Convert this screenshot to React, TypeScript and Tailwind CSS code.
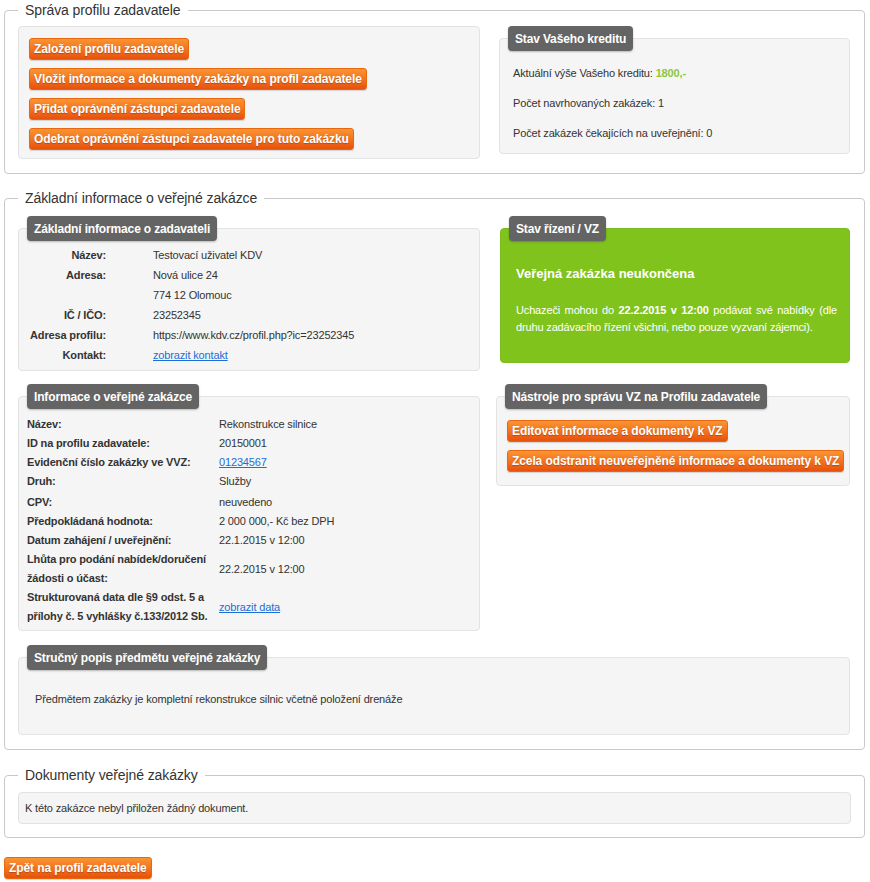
import type { ReactNode } from "react";

const Fieldset = ({ legend, className = "", children }: { legend: string; className?: string; children: ReactNode }) => (
  <fieldset className={`border border-[#c9c9c9] rounded-[4px] px-[13px] ${className}`}>
    <legend className="px-[7px] text-[14px] leading-[16px] tracking-[-0.1px] text-[#333]">{legend}</legend>
    {children}
  </fieldset>
);

// tmavý štítek nad panelem
const Tab = ({ children }: { children: ReactNode }) => (
  <div className="relative z-10 self-start ml-[9px] -mb-[13px] h-[25px] px-[7px] flex items-center rounded-[4px] bg-[#646464] text-white text-[12px] font-bold tracking-[-0.15px] whitespace-nowrap shadow-[0_1px_2px_rgba(0,0,0,0.25)]">
    {children}
  </div>
);

const OrangeButton = ({ children }: { children: ReactNode }) => (
  <button className="h-[22px] px-[4px] rounded-[3px] border border-[#e9680f] bg-linear-to-b from-[#fa9431] to-[#e8500a] text-white text-[12px] font-bold leading-[20px] tracking-[-0.1px] whitespace-nowrap [text-shadow:0_1px_1px_rgba(0,0,0,0.25)] shadow-[0_1px_1px_rgba(0,0,0,0.15)]">
    {children}
  </button>
);

const panel = "bg-[#f5f5f5] border border-[#e3e3e3] rounded-[4px]";

const zadavatel: [string, ReactNode][] = [
  ["Název:", "Testovací uživatel KDV"],
  ["Adresa:", "Nová ulice 24"],
  ["", "774 12 Olomouc"],
  ["IČ / IČO:", "23252345"],
  ["Adresa profilu:", "https://www.kdv.cz/profil.php?ic=23252345"],
  ["Kontakt:", <a href="#" className="text-[#1a6fd8] underline">zobrazit kontakt</a>],
];

const zakazka: [ReactNode, ReactNode, string?][] = [
  ["Název:", "Rekonstrukce silnice"],
  ["ID na profilu zadavatele:", "20150001"],
  ["Evidenční číslo zakázky ve VVZ:", <a href="#" className="text-[#1a6fd8] underline">01234567</a>],
  ["Druh:", "Služby"],
  ["CPV:", "neuvedeno", "mt-[2px]"],
  ["Předpokládaná hodnota:", "2 000 000,- Kč bez DPH"],
  ["Datum zahájení / uveřejnění:", "22.1.2015 v 12:00"],
  [<>Lhůta pro podání nabídek/doručení<br />žádosti o účast:</>, "22.2.2015 v 12:00"],
  [<>Strukturovaná data dle §9 odst. 5 a<br />přílohy č. 5 vyhlášky č.133/2012 Sb.</>, <a href="#" className="text-[#1a6fd8] underline">zobrazit data</a>],
];

export default function App() {
  return (
    <div className="w-[870px] min-h-[882px] bg-white pl-[4px] pr-[5px] pt-[2px] font-['Liberation_Sans',Arial,sans-serif] text-[11px] tracking-[-0.15px] text-[#333]">
      {/* Správa profilu */}
      <Fieldset legend="Správa profilu zadavatele" className="pt-[8px] pb-[14px]">
        <div className="grid grid-cols-[462px_351px] gap-x-[19px] items-start">
          <div className={`${panel} flex flex-col items-start gap-[8px] pl-[10px] pt-[11px] pb-[8px]`}>
            <OrangeButton>Založení profilu zadavatele</OrangeButton>
            <OrangeButton>Vložit informace a dokumenty zakázky na profil zadavatele</OrangeButton>
            <OrangeButton>Přidat oprávnění zástupci zadavatele</OrangeButton>
            <OrangeButton>Odebrat oprávnění zástupci zadavatele pro tuto zakázku</OrangeButton>
          </div>
          <div className="flex flex-col">
            <Tab>Stav Vašeho kreditu</Tab>
            <div className={`${panel} pl-[13px] pt-[19px] pb-[5px] leading-[30px]`}>
              <div>
                Aktuální výše Vašeho kreditu: <span className="font-bold text-[#8cc63f]">1800,-</span>
              </div>
              <div>Počet navrhovaných zakázek: 1</div>
              <div>Počet zakázek čekajících na uveřejnění: 0</div>
            </div>
          </div>
        </div>
      </Fieldset>

      {/* Základní informace */}
      <Fieldset legend="Základní informace o veřejné zakázce" className="mt-[16px] pt-[10px] pb-[14px]">
        <div className="grid grid-cols-[462px_350px] gap-x-[20px] gap-y-[13px] items-start">
          <div className="flex flex-col">
            <Tab>Základní informace o zadavateli</Tab>
            <div className={`${panel} pt-[16px] pb-[5px]`}>
              {zadavatel.map(([label, value], i) => (
                <div key={i} className="flex leading-[20px]">
                  <div className="w-[87px] text-right font-bold">{label}</div>
                  <div className="pl-[47px]">{value}</div>
                </div>
              ))}
            </div>
          </div>

          <div className="flex flex-col">
            <Tab>Stav řízení / VZ</Tab>
            <div className="rounded-[4px] border border-[#7bbd1a] bg-[#80c31d] text-white pl-[15px] pr-[12px] pt-[35px] pb-[26px]">
              <div className="text-[13px] font-bold leading-[20px] tracking-normal">Veřejná zakázka neukončena</div>
              <p className="mt-[18px] leading-[17px] text-justify">
                Uchazeči mohou do <b>22.2.2015 v 12:00</b> podávat své nabídky (dle druhu zadávacího řízení všichni, nebo pouze vyzvaní zájemci).
              </p>
            </div>
          </div>

          <div className="flex flex-col">
            <Tab>Informace o veřejné zakázce</Tab>
            <div className={`${panel} pl-[8px] pt-[18px] pb-[4px]`}>
              {zakazka.map(([label, value, extra], i) => (
                <div key={i} className={`grid grid-cols-[192px_1fr] items-center leading-[19px] ${extra ?? ""}`}>
                  <div className="font-bold">{label}</div>
                  <div>{value}</div>
                </div>
              ))}
            </div>
          </div>

          <div className="flex flex-col -ml-[4px]">
            <Tab>Nástroje pro správu VZ na Profilu zadavatele</Tab>
            <div className={`${panel} flex flex-col items-start gap-[8px] pl-[10px] pt-[23px] pb-[13px]`}>
              <OrangeButton>Editovat informace a dokumenty k VZ</OrangeButton>
              <OrangeButton>Zcela odstranit neuveřejněné informace a dokumenty k VZ</OrangeButton>
            </div>
          </div>

          <div className="col-span-2 flex flex-col mt-[1px]">
            <Tab>Stručný popis předmětu veřejné zakázky</Tab>
            <div className={`${panel} pl-[16px] pt-[31px] pb-[25px] leading-[20px]`}>
              Předmětem zakázky je kompletní rekonstrukce silnic včetně položení drenáže
            </div>
          </div>
        </div>
      </Fieldset>

      {/* Dokumenty */}
      <Fieldset legend="Dokumenty veřejné zakázky" className="mt-[17px] pt-[9px] pb-[13px]">
        <div className={`${panel} h-[32px] pl-[6px] flex items-center`}>
          K této zakázce nebyl přiložen žádný dokument.
        </div>
      </Fieldset>

      <div className="mt-[19px]">
        <OrangeButton>Zpět na profil zadavatele</OrangeButton>
      </div>
    </div>
  );
}
